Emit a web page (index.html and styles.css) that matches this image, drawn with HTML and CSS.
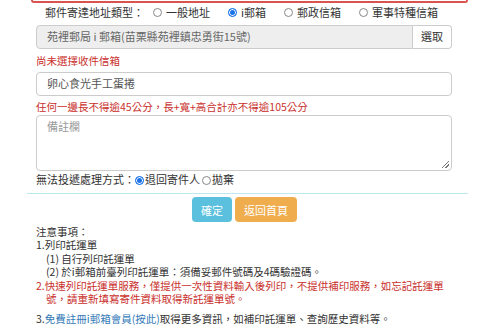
FILE: index.html
```html
<!DOCTYPE html>
<html lang="zh-Hant">
<head>
    <meta charset="UTF-8">
    <title>寄件資料</title>
    <link rel="stylesheet" href="styles.css">
</head>
<body>
    <div class="wrap">
        <div class="panel-end"></div>

        <div class="form-body">
            <div class="type-row">
                <span class="type-label">郵件寄達地址類型：</span>
                <span class="radio"><i class="dot"></i>一般地址</span>
                <span class="radio"><i class="dot on"></i>i郵箱</span>
                <span class="radio"><i class="dot"></i>郵政信箱</span>
                <span class="radio"><i class="dot"></i>軍事特種信箱</span>
            </div>

            <div class="input-group">
                <div class="field readonly">苑裡郵局 i 郵箱(苗栗縣苑裡鎮忠勇街15號)</div>
                <div class="addon">選取</div>
            </div>
            <div class="hint">尚未選擇收件信箱</div>

            <div class="field">卵心食光手工蛋捲</div>
            <div class="hint tight">任何一邊長不得逾45公分，長+寬+高合計亦不得逾105公分</div>

            <div class="field memo"><span class="placeholder">備註欄</span><i class="grip"></i></div>

            <div class="return-row">
                無法投遞處理方式：<span class="radio small"><i class="dot on"></i>退回寄件人</span><span class="radio small"><i class="dot"></i>拋棄</span>
            </div>
        </div>

        <div class="actions">
            <button class="btn btn-info">確定</button>
            <button class="btn btn-warning">返回首頁</button>
        </div>

        <div class="notes">
            <div>注意事項：</div>
            <div>1.列印託運單</div>
            <div class="sub">(1) 自行列印託運單</div>
            <div class="sub">(2) 於i郵箱前臺列印託運單：須備妥郵件號碼及4碼驗證碼。</div>
            <div class="red">2.快速列印託運單服務，僅提供一次性資料輸入後列印，不提供補印服務，如忘記託運單</div>
            <div class="red sub">號，請重新填寫寄件資料取得新託運單號。</div>
            <div class="last">3.<a href="#">免費註冊i郵箱會員(按此)</a>取得更多資訊，如補印託運單、查詢歷史資料等。</div>
        </div>
    </div>
</body>
</html>
```

FILE: styles.css
```css
body {
    margin: 0;
    background: #fff;
    color: #333;
    font-family: "Noto Sans CJK TC", "Liberation Sans", sans-serif;
    font-size: 10.5px;
    line-height: 1.25;
}

.wrap {
    margin-left: 27px;
    width: 441px;
}

/* bottom edge of the panel above */
.panel-end {
    height: 1px;
    margin: 0 0 0 4px;
    border: 2px solid #d9534f;
    border-top: none;
    border-radius: 0 0 4px 4px;
}

.form-body {
    padding: 0 16px 0 9px;
}

.type-row {
    display: flex;
    align-items: center;
    height: 19px;
    padding-left: 9px;
    font-size: 11px;
    white-space: nowrap;
}

.type-label {
    margin-right: 9px;
}

.radio {
    display: inline-flex;
    align-items: center;
    margin-right: 18px;
    white-space: nowrap;
}

.dot {
    display: inline-block;
    width: 7px;
    height: 7px;
    border: 1px solid #888;
    border-radius: 50%;
    margin-right: 4px;
    box-sizing: content-box;
}

.dot.on {
    background: #1a73e8;
    border-color: #1a73e8;
    box-shadow: inset 0 0 0 1px #fff;
}

.input-group {
    display: flex;
    margin-top: 3px;
}

.field {
    height: 24px;
    box-sizing: border-box;
    border: 1px solid #ccc;
    border-radius: 4px;
    padding: 0 10px;
    display: flex;
    align-items: center;
    font-size: 11px;
    color: #555;
    background: #fff;
    white-space: nowrap;
}

.input-group .field {
    flex: 1;
    border-radius: 4px 0 0 4px;
}

.field.readonly {
    background: #eee;
    color: #666;
}

.addon {
    width: 39px;
    height: 24px;
    box-sizing: border-box;
    border: 1px solid #ccc;
    border-left: none;
    border-radius: 0 4px 4px 0;
    display: flex;
    align-items: center;
    justify-content: center;
    font-size: 11px;
    color: #333;
}

.hint {
    color: #c9302c;
    height: 23px;
    line-height: 23px;
    white-space: nowrap;
}

.hint.tight {
    height: 19px;
    line-height: 21px;
}

.memo {
    height: 56px;
    align-items: flex-start;
    padding-top: 4px;
    position: relative;
}

.placeholder {
    color: #999;
}

.grip {
    position: absolute;
    right: 2px;
    bottom: 2px;
    width: 7px;
    height: 7px;
    background: linear-gradient(135deg, transparent 45%, #777 46%, #777 54%, transparent 55%, transparent 70%, #777 71%, #777 79%, transparent 80%);
}

.return-row {
    display: flex;
    align-items: center;
    height: 18px;
    font-size: 11px;
    white-space: nowrap;
}

.radio.small {
    margin-right: 2px;
}

.radio.small .dot {
    margin-right: 1px;
}

.actions {
    border-top: 1px solid #bce8f1;
    margin-top: 4px;
    padding-top: 3px;
    display: flex;
    justify-content: center;
    gap: 3px;
    padding-right: 6px;
}

.btn {
    height: 25px;
    border: none;
    border-radius: 4px;
    color: #fff;
    font-family: inherit;
    font-size: 11px;
    padding: 0 8px;
}

.btn-info {
    background: #5bc0de;
    width: 40px;
}

.btn-warning {
    background: #f0ad4e;
    width: 62px;
}

.notes {
    padding-left: 9px;
    margin-top: 3px;
    line-height: 13.4px;
    font-size: 10.5px;
    white-space: nowrap;
}

.notes .sub {
    padding-left: 10px;
}

.notes .red {
    color: #c9302c;
}

.notes .last {
    margin-top: 7px;
}

.notes a {
    color: #337ab7;
    text-decoration: none;
}
```
